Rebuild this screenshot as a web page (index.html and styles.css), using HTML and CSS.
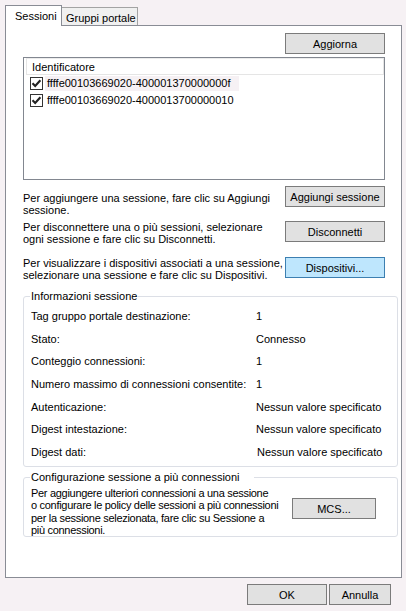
FILE: index.html
```html
<!DOCTYPE html>
<html lang="it">
<head>
<meta charset="utf-8">
<title>Sessioni</title>
<link rel="stylesheet" href="styles.css">
</head>
<body>
<div class="dialog">
  <div class="tabs">
    <div class="tab tab-active">Sessioni</div>
    <div class="tab tab-idle">Gruppi portale</div>
  </div>
  <div class="panel">
    <div class="toolbar"><button class="btn btn-side">Aggiorna</button></div>
    <div class="listbox">
      <div class="list-header">Identificatore</div>
      <div class="list-row">
        <svg class="check" width="13" height="13" viewBox="0 0 13 13"><rect x="0.5" y="0.5" width="12" height="12" fill="#fff" stroke="#333"/><path d="M2.5 6.2 L5.2 9 L10.4 3.3" fill="none" stroke="#222" stroke-width="2.1"/></svg>
        <span class="item item-sel">ffffe00103669020-400001370000000f</span>
      </div>
      <div class="list-row">
        <svg class="check" width="13" height="13" viewBox="0 0 13 13"><rect x="0.5" y="0.5" width="12" height="12" fill="#fff" stroke="#333"/><path d="M2.5 6.2 L5.2 9 L10.4 3.3" fill="none" stroke="#222" stroke-width="2.1"/></svg>
        <span class="item">ffffe00103669020-4000013700000010</span>
      </div>
    </div>

    <div class="action action-add">
      <p class="desc desc-low">Per aggiungere una sessione, fare clic su Aggiungi<br>sessione.</p>
      <button class="btn btn-side">Aggiungi sessione</button>
    </div>
    <div class="action action-disc">
      <p class="desc">Per disconnettere una o più sessioni, selezionare<br>ogni sessione e fare clic su Disconnetti.</p>
      <button class="btn btn-side">Disconnetti</button>
    </div>
    <div class="action action-dev">
      <p class="desc">Per visualizzare i dispositivi associati a una sessione,<br>selezionare una sessione e fare clic su Dispositivi.</p>
      <button class="btn btn-side btn-focus">Dispositivi...</button>
    </div>

    <fieldset class="group group-info">
      <legend class="group-title">Informazioni sessione</legend>
      <div class="info-grid">
        <span>Tag gruppo portale destinazione:</span><span>1</span>
        <span>Stato:</span><span>Connesso</span>
        <span>Conteggio connessioni:</span><span>1</span>
        <span>Numero massimo di connessioni consentite:</span><span>1</span>
        <span>Autenticazione:</span><span>Nessun valore specificato</span>
        <span>Digest intestazione:</span><span>Nessun valore specificato</span>
        <span>Digest dati:</span><span class="nudge">Nessun valore specificato</span>
      </div>
    </fieldset>

    <fieldset class="group group-mcs">
      <legend class="group-title group-title-wide">Configurazione sessione a più connessioni</legend>
      <div class="mcs">
        <p class="mcs-text">Per aggiungere ulteriori connessioni a una sessione<br>o configurare le policy delle sessioni a più connessioni<br>per la sessione selezionata, fare clic su Sessione a<br>più connessioni.</p>
        <button class="btn btn-mcs">MCS...</button>
      </div>
    </fieldset>
  </div>
  <div class="footer">
    <button class="btn btn-ok">OK</button>
    <button class="btn btn-cancel">Annulla</button>
  </div>
</div>
</body>
</html>
```

FILE: styles.css
```css
* { box-sizing: border-box; }

html, body {
  margin: 0;
  padding: 0;
  background: #f6f1f4;
}

body {
  font-family: "Liberation Sans", Arial, sans-serif;
  font-size: 11px;
  line-height: 12px;
  color: #000;
  width: 406px;
  height: 611px;
  overflow: hidden;
}

.dialog {
  padding: 5px 0 0 5px;
}

/* Tabs */
.tabs {
  display: flex;
  align-items: flex-start;
  height: 21px;
}

.tab {
  border: 1px solid #898c95;
  border-bottom: none;
  white-space: nowrap;
}

.tab-active {
  position: relative;
  z-index: 2;
  width: 57px;
  height: 21px;
  background: #fff;
  padding: 4px 0 0 9px;
}

.tab-idle {
  margin-left: -1px;
  margin-top: 2px;
  width: 77px;
  height: 18px;
  background: #f0f0f0;
  border-color: #a3a3a3;
  padding: 4px 0 0 4px;
}

/* Panel */
.panel {
  margin-top: -1px;
  width: 397px;
  height: 553px;
  background: #fff;
  border: 1px solid #898c95;
  padding: 0 2px 0 17px;
  display: flex;
  flex-direction: column;
  align-items: flex-start;
}

.btn {
  font: inherit;
  color: #000;
  margin: 0;
  padding: 0;
  height: 21px;
  background: #e1e1e1;
  border: 1px solid #7b7b7b;
  border-radius: 0;
  display: flex;
  align-items: center;
  justify-content: center;
  white-space: nowrap;
}

.btn-side { width: 100px; }

.btn-focus {
  background: #bee6fd;
  border-color: #3c7fb1;
}

.toolbar {
  margin-top: 7px;
  width: 362px;
  display: flex;
  justify-content: flex-end;
}

/* List */
.listbox {
  margin-top: 3px;
  width: 362px;
  height: 123px;
  border: 1px solid #828790;
  background: #fff;
  padding: 0 1px 0 1px;
}

.list-header {
  height: 17px;
  margin-left: 1px;
  width: 358px;
  border: 1px solid #e5e5e5;
  border-top-color: #ececec;
  padding: 2px 0 0 5px;
}

.list-row {
  height: 17px;
  display: flex;
  align-items: center;
  padding-left: 5px;
}

.check {
  flex: none;
  display: block;
}

.item {
  margin-left: 2px;
  height: 15px;
  line-height: 15px;
  padding: 0 8px 0 2px;
  white-space: nowrap;
}

.item-sel { background: #f6f1f4; }

/* Action rows */
.action {
  width: 362px;
  display: flex;
  justify-content: space-between;
  align-items: flex-start;
}

.action-add { margin-top: 6px; }
.action-disc { margin-top: 5px; }
.action-dev { margin-top: 12px; }

.desc {
  margin: 0;
  white-space: nowrap;
}

.desc-low { margin-top: 6px; }

/* Group boxes */
.group {
  margin: 0;
  width: 375px;
  min-inline-size: 0;
  border: 1px solid #dcdfe6;
  border-radius: 3px;
  padding: 0 0 0 7px;
}

.group-title {
  padding: 0 1px;
  margin-left: -1px;
  line-height: 12px;
  white-space: nowrap;
}

.group-title-wide { padding-right: 14px; }

.group-info {
  margin-top: 9px;
  padding-top: 3px;
  padding-bottom: 3px;
}

.info-grid {
  display: grid;
  grid-template-columns: 225px 1fr;
  grid-auto-rows: 22.6px;
  align-items: center;
  white-space: nowrap;
}

.nudge { margin-left: 1px; }

.group-mcs {
  margin-top: 4px;
  padding-top: 4px;
  padding-bottom: 0;
}

.mcs {
  display: flex;
  align-items: flex-start;
}

.mcs-text {
  margin: 0;
  width: 261px;
  line-height: 12.3px;
  letter-spacing: -0.3px;
  white-space: nowrap;
}

.btn-mcs {
  width: 84px;
  margin-top: 11px;
}

/* Footer */
.footer {
  display: flex;
  margin-top: 6px;
  padding-left: 242px;
  gap: 2px;
}

.btn-ok { width: 80px; }
.btn-cancel { width: 62px; }
```
